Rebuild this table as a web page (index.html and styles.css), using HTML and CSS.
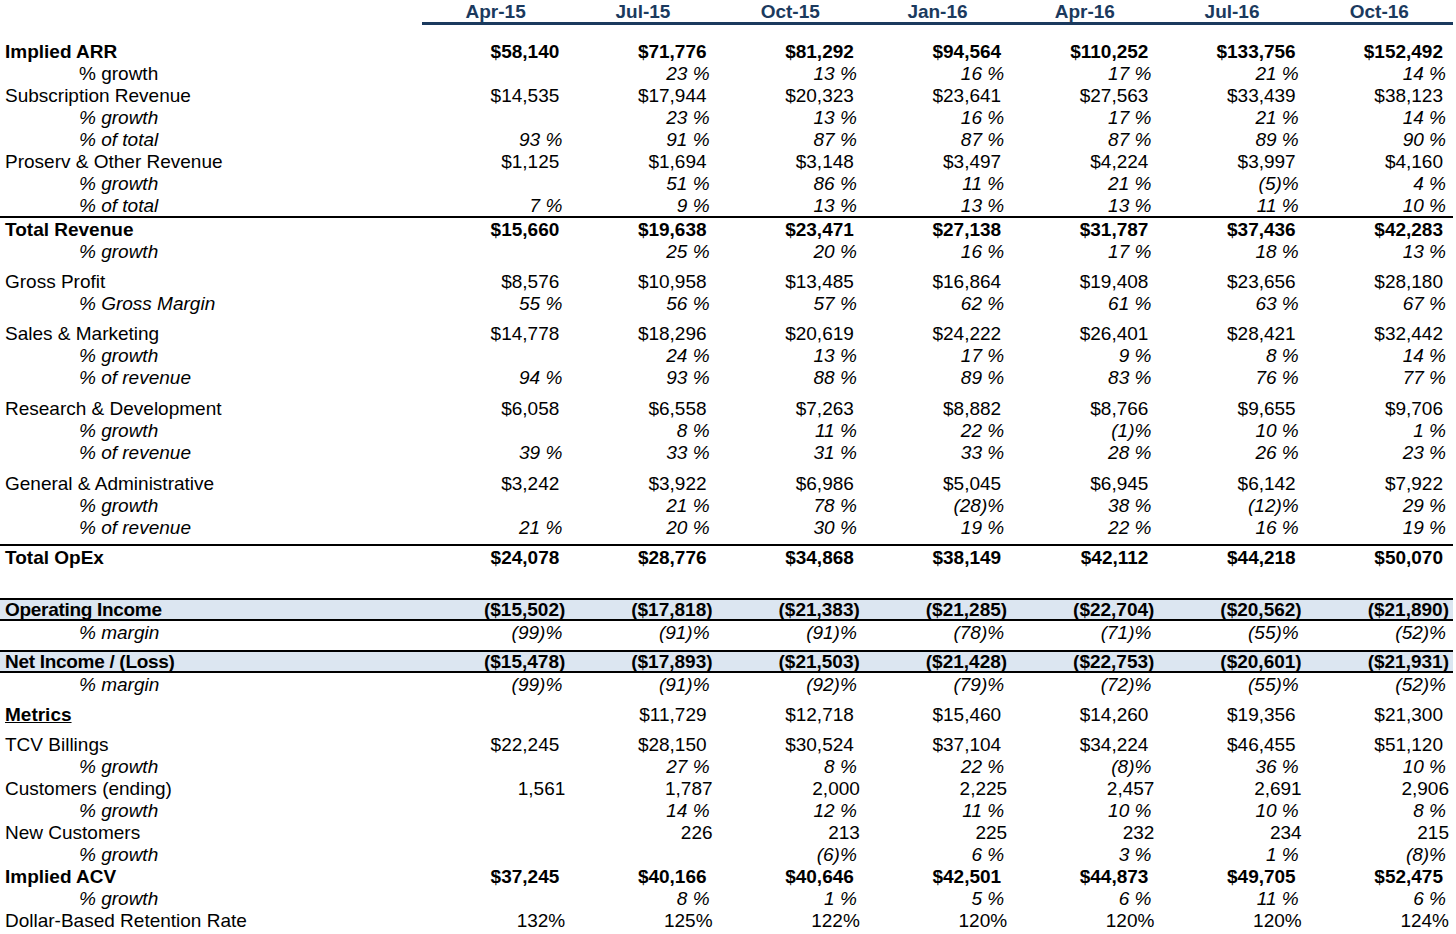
FILE: index.html
```html
<!DOCTYPE html>
<html lang="en">

<head>
    <meta charset="UTF-8">
    <meta name="viewport" content="width=device-width, initial-scale=1.0">
    <title>Quarterly Operating Model</title>

    <link rel="stylesheet" href="styles.css">
</head>

<body>
    <table class="model">
        <colgroup>
            <col class="col-label">
            <col><col><col><col><col><col><col>
        </colgroup>
        <thead>
            <tr class="head">
                <th></th>
                <th>Apr-15</th>
                <th>Jul-15</th>
                <th>Oct-15</th>
                <th>Jan-16</th>
                <th>Apr-16</th>
                <th>Jul-16</th>
                <th>Oct-16</th>
            </tr>
        </thead>
        <tbody>
            <tr class="gap g15"><td colspan="8"></td></tr>

            <!-- revenue -->
            <tr class="dol bold">
                <td class="lbl">Implied ARR</td>
                <td>$58,140</td><td>$71,776</td><td>$81,292</td><td>$94,564</td><td>$110,252</td><td>$133,756</td><td>$152,492</td>
            </tr>
            <tr class="pct">
                <td class="lbl ind upright">% growth</td>
                <td></td><td>23 %</td><td>13 %</td><td>16 %</td><td>17 %</td><td>21 %</td><td>14 %</td>
            </tr>
            <tr class="dol">
                <td class="lbl">Subscription Revenue</td>
                <td>$14,535</td><td>$17,944</td><td>$20,323</td><td>$23,641</td><td>$27,563</td><td>$33,439</td><td>$38,123</td>
            </tr>
            <tr class="pct">
                <td class="lbl ind">% growth</td>
                <td></td><td>23 %</td><td>13 %</td><td>16 %</td><td>17 %</td><td>21 %</td><td>14 %</td>
            </tr>
            <tr class="pct">
                <td class="lbl ind">% of total</td>
                <td>93 %</td><td>91 %</td><td>87 %</td><td>87 %</td><td>87 %</td><td>89 %</td><td>90 %</td>
            </tr>
            <tr class="dol">
                <td class="lbl">Proserv &amp; Other Revenue</td>
                <td>$1,125</td><td>$1,694</td><td>$3,148</td><td>$3,497</td><td>$4,224</td><td>$3,997</td><td>$4,160</td>
            </tr>
            <tr class="pct">
                <td class="lbl ind">% growth</td>
                <td></td><td>51 %</td><td>86 %</td><td>11 %</td><td>21 %</td><td>(5)%</td><td>4 %</td>
            </tr>
            <tr class="pct">
                <td class="lbl ind">% of total</td>
                <td>7 %</td><td>9 %</td><td>13 %</td><td>13 %</td><td>13 %</td><td>11 %</td><td>10 %</td>
            </tr>
            <tr class="dol bold rule">
                <td class="lbl">Total Revenue</td>
                <td>$15,660</td><td>$19,638</td><td>$23,471</td><td>$27,138</td><td>$31,787</td><td>$37,436</td><td>$42,283</td>
            </tr>
            <tr class="pct">
                <td class="lbl ind">% growth</td>
                <td></td><td>25 %</td><td>20 %</td><td>16 %</td><td>17 %</td><td>18 %</td><td>13 %</td>
            </tr>

            <tr class="gap g8"><td colspan="8"></td></tr>
            <tr class="dol">
                <td class="lbl">Gross Profit</td>
                <td>$8,576</td><td>$10,958</td><td>$13,485</td><td>$16,864</td><td>$19,408</td><td>$23,656</td><td>$28,180</td>
            </tr>
            <tr class="pct">
                <td class="lbl ind">% Gross Margin</td>
                <td>55 %</td><td>56 %</td><td>57 %</td><td>62 %</td><td>61 %</td><td>63 %</td><td>67 %</td>
            </tr>

            <!-- operating expenses -->
            <tr class="gap g8"><td colspan="8"></td></tr>
            <tr class="dol">
                <td class="lbl">Sales &amp; Marketing</td>
                <td>$14,778</td><td>$18,296</td><td>$20,619</td><td>$24,222</td><td>$26,401</td><td>$28,421</td><td>$32,442</td>
            </tr>
            <tr class="pct">
                <td class="lbl ind">% growth</td>
                <td></td><td>24 %</td><td>13 %</td><td>17 %</td><td>9 %</td><td>8 %</td><td>14 %</td>
            </tr>
            <tr class="pct">
                <td class="lbl ind">% of revenue</td>
                <td>94 %</td><td>93 %</td><td>88 %</td><td>89 %</td><td>83 %</td><td>76 %</td><td>77 %</td>
            </tr>

            <tr class="gap g9"><td colspan="8"></td></tr>
            <tr class="dol">
                <td class="lbl">Research &amp; Development</td>
                <td>$6,058</td><td>$6,558</td><td>$7,263</td><td>$8,882</td><td>$8,766</td><td>$9,655</td><td>$9,706</td>
            </tr>
            <tr class="pct">
                <td class="lbl ind">% growth</td>
                <td></td><td>8 %</td><td>11 %</td><td>22 %</td><td>(1)%</td><td>10 %</td><td>1 %</td>
            </tr>
            <tr class="pct">
                <td class="lbl ind">% of revenue</td>
                <td>39 %</td><td>33 %</td><td>31 %</td><td>33 %</td><td>28 %</td><td>26 %</td><td>23 %</td>
            </tr>

            <tr class="gap g9"><td colspan="8"></td></tr>
            <tr class="dol">
                <td class="lbl">General &amp; Administrative</td>
                <td>$3,242</td><td>$3,922</td><td>$6,986</td><td>$5,045</td><td>$6,945</td><td>$6,142</td><td>$7,922</td>
            </tr>
            <tr class="pct">
                <td class="lbl ind">% growth</td>
                <td></td><td>21 %</td><td>78 %</td><td>(28)%</td><td>38 %</td><td>(12)%</td><td>29 %</td>
            </tr>
            <tr class="pct">
                <td class="lbl ind">% of revenue</td>
                <td>21 %</td><td>20 %</td><td>30 %</td><td>19 %</td><td>22 %</td><td>16 %</td><td>19 %</td>
            </tr>

            <tr class="gap g6"><td colspan="8"></td></tr>
            <tr class="dol bold rule">
                <td class="lbl">Total OpEx</td>
                <td>$24,078</td><td>$28,776</td><td>$34,868</td><td>$38,149</td><td>$42,112</td><td>$44,218</td><td>$50,070</td>
            </tr>

            <!-- income -->
            <tr class="gap g30"><td colspan="8"></td></tr>
            <tr class="num bold band">
                <td class="lbl">Operating Income</td>
                <td>($15,502)</td><td>($17,818)</td><td>($21,383)</td><td>($21,285)</td><td>($22,704)</td><td>($20,562)</td><td>($21,890)</td>
            </tr>
            <tr class="pct">
                <td class="lbl ind">% margin</td>
                <td>(99)%</td><td>(91)%</td><td>(91)%</td><td>(78)%</td><td>(71)%</td><td>(55)%</td><td>(52)%</td>
            </tr>

            <tr class="gap g7"><td colspan="8"></td></tr>
            <tr class="num bold band">
                <td class="lbl">Net Income / (Loss)</td>
                <td>($15,478)</td><td>($17,893)</td><td>($21,503)</td><td>($21,428)</td><td>($22,753)</td><td>($20,601)</td><td>($21,931)</td>
            </tr>
            <tr class="pct">
                <td class="lbl ind">% margin</td>
                <td>(99)%</td><td>(91)%</td><td>(92)%</td><td>(79)%</td><td>(72)%</td><td>(55)%</td><td>(52)%</td>
            </tr>

            <!-- metrics -->
            <tr class="gap g8"><td colspan="8"></td></tr>
            <tr class="dol">
                <td class="lbl section">Metrics</td>
                <td></td><td>$11,729</td><td>$12,718</td><td>$15,460</td><td>$14,260</td><td>$19,356</td><td>$21,300</td>
            </tr>

            <tr class="gap g8"><td colspan="8"></td></tr>
            <tr class="dol">
                <td class="lbl">TCV Billings</td>
                <td>$22,245</td><td>$28,150</td><td>$30,524</td><td>$37,104</td><td>$34,224</td><td>$46,455</td><td>$51,120</td>
            </tr>
            <tr class="pct">
                <td class="lbl ind">% growth</td>
                <td></td><td>27 %</td><td>8 %</td><td>22 %</td><td>(8)%</td><td>36 %</td><td>10 %</td>
            </tr>
            <tr class="num">
                <td class="lbl">Customers (ending)</td>
                <td>1,561</td><td>1,787</td><td>2,000</td><td>2,225</td><td>2,457</td><td>2,691</td><td>2,906</td>
            </tr>
            <tr class="pct">
                <td class="lbl ind">% growth</td>
                <td></td><td>14 %</td><td>12 %</td><td>11 %</td><td>10 %</td><td>10 %</td><td>8 %</td>
            </tr>
            <tr class="num">
                <td class="lbl">New Customers</td>
                <td></td><td>226</td><td>213</td><td>225</td><td>232</td><td>234</td><td>215</td>
            </tr>
            <tr class="pct">
                <td class="lbl ind">% growth</td>
                <td></td><td></td><td>(6)%</td><td>6 %</td><td>3 %</td><td>1 %</td><td>(8)%</td>
            </tr>
            <tr class="dol bold">
                <td class="lbl">Implied ACV</td>
                <td>$37,245</td><td>$40,166</td><td>$40,646</td><td>$42,501</td><td>$44,873</td><td>$49,705</td><td>$52,475</td>
            </tr>
            <tr class="pct">
                <td class="lbl ind">% growth</td>
                <td></td><td>8 %</td><td>1 %</td><td>5 %</td><td>6 %</td><td>11 %</td><td>6 %</td>
            </tr>
            <tr class="num">
                <td class="lbl">Dollar-Based Retention Rate</td>
                <td>132%</td><td>125%</td><td>122%</td><td>120%</td><td>120%</td><td>120%</td><td>124%</td>
            </tr>
        </tbody>
    </table>
</body>

</html>
```

FILE: styles.css
```css
body {
    font-family: "Liberation Sans", Arial, sans-serif;
    background-color: #fff;
    color: #000;
    margin: 0;
}

.model {
    width: 1453px;
    table-layout: fixed;
    border-collapse: separate;
    border-spacing: 0;
    font-size: 19px;
    line-height: 21px;
}

.col-label {
    width: 422px;
}

.model td,
.model th {
    padding: 1px 0 0 0;
    white-space: nowrap;
    text-align: right;
}

/* header */
.head th {
    color: #1b3a5e;
    font-weight: bold;
    text-align: center;
    border-bottom: 3px solid #1b3a5e;
}

.head th:first-child {
    border-bottom: none;
}

/* spacer rows */
.model .gap td { line-height: 0; padding: 0; }
.g6 td { height: 6px; }
.g7 td { height: 7px; }
.g8 td { height: 8px; }
.g9 td { height: 9px; }
.g15 td { height: 15px; }
.g30 td { height: 30px; }

/* labels */
.model .lbl {
    text-align: left;
    padding-left: 5px;
}

.model .ind {
    padding-left: 79px;
}

.section {
    font-weight: bold;
    text-decoration: underline;
}

/* value formats */
.dol td { padding-right: 10px; }
.pct td { padding-right: 7px; font-style: italic; }
.num td { padding-right: 4px; }

.pct .upright { font-style: normal; }

.bold td { font-weight: bold; }

.rule td {
    border-top: 2px solid #000;
}

.model .band td {
    background-color: #dce6f1;
    line-height: 19px;
    padding-top: 0;
    border-top: 2px solid #000;
    border-bottom: 2px solid #000;
}

.band .lbl {
    letter-spacing: -0.3px;
}
```
